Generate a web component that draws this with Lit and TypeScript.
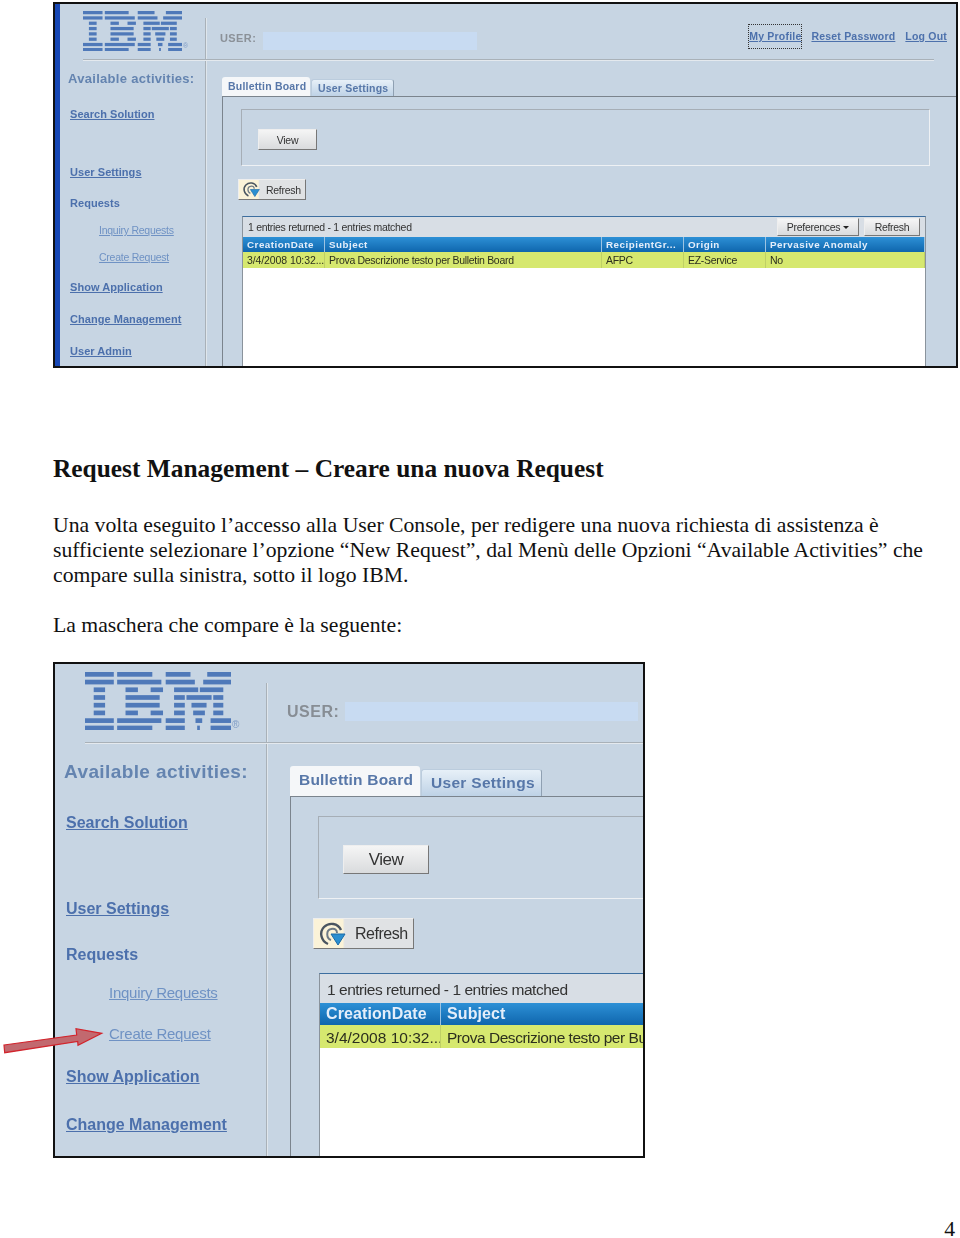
import { LitElement, html, svg, css } from "lit";
import { customElement, property } from "lit/decorators.js";

type NavItem = [string, "title" | "main" | "plain" | "sub", number];

const NAV_A: NavItem[] = [
  ["Available activities:", "title", 11],
  ["Search Solution", "main", 21],
  ["User Settings", "main", 44],
  ["Requests", "plain", 17],
  ["Inquiry Requests", "sub", 13],
  ["Create Request", "sub", 13],
  ["Show Application", "main", 16],
  ["Change Management", "main", 18],
  ["User Admin", "main", 18],
];
const NAV_B: NavItem[] = [
  ["Available activities:", "title", 18],
  ["Search Solution", "main", 31],
  ["User Settings", "main", 66],
  ["Requests", "plain", 26],
  ["Inquiry Requests", "sub", 18],
  ["Create Request", "sub", 21],
  ["Show Application", "main", 23],
  ["Change Management", "main", 28],
];

const ROWS: [number, number[]][] = [
  [12, [17, 103, 113, 218, 258, 332, 382, 453]],
  [35, [17, 103, 113, 245, 258, 345, 370, 453]],
  [58, [43, 77, 138, 175, 213, 250, 283, 355, 360, 430]],
  [81, [43, 77, 138, 240, 283, 315, 320, 395, 400, 430]],
  [104, [43, 77, 138, 240, 283, 315, 335, 380, 400, 430]],
  [127, [43, 77, 138, 175, 213, 250, 283, 315, 340, 375, 400, 430]],
  [150, [17, 103, 113, 245, 258, 315, 347, 367, 392, 453]],
  [172, [17, 103, 113, 218, 258, 315, 352, 360, 392, 453]],
];

@customElement("console-shot")
class ConsoleShot extends LitElement {
  @property() variant = "a";

  static styles = css`
    :host { display: block; }
    .shot {
      --pad-logo: 23px; --logo-w: 99px; --logo-h: 40px; --logo-top: 7px; --head-h: 55px; --div-top: 14px;
      --side-w: 145px; --fs-user: 11px; --fs-link: 11px; --fs-title: 13px; --fs-sub: 10.5px; --sub-ls: -.25px; --lh: 14px;
      --fs-tab: 10.5px; --fs-cell: 10.5px; --cell-ls: -.3px;
      --link-ls: .05px; --title-ls: .3px;
      display: flex; box-sizing: border-box; border: 2px solid #111; background: #c7d5e3; overflow: hidden;
      font-family: "Liberation Sans", Arial, sans-serif; width: 905px; height: 366px;
    }
    .shot.b {
      --pad-logo: 30px; --logo-w: 146px; --logo-h: 58px; --logo-top: 8px; --head-h: 78px; --div-top: 19px;
      --side-w: 211px; --fs-user: 16px; --fs-link: 16px; --fs-title: 19px; --fs-sub: 15px; --sub-ls: -.25px; --lh: 20px;
      --fs-tab: 15.5px; --fs-cell: 15.5px; --cell-ls: -.47px;
      --link-ls: 0px; --title-ls: .4px;
      width: 592px; height: 496px;
    }
    .inner { display: flex; flex: 1; min-width: 0; filter: blur(.35px); }
    .strip { width: 5px; flex: none; background: #1747b4; }
    .b .strip { display: none; }
    .col { flex: 1; min-width: 0; display: flex; flex-direction: column; }
    .head { display: flex; height: var(--head-h); flex: none; }
    .logo-cell { width: var(--side-w); flex: none; box-sizing: border-box; padding: var(--logo-top) 0 0 var(--pad-logo); display: flex; align-items: flex-start; }
    .logo { width: var(--logo-w); height: var(--logo-h); flex: none; fill: #4f79b9; }
    .reg { font-size: 7px; color: #7f9cc6; align-self: flex-start; margin: 31px 0 0 1px; }
    .b .reg { font-size: 10px; margin: 47px 0 0 1px; }
    .vline { width: 1px; flex: none; background: #a9b1b8; box-shadow: 1px 0 0 #dfe6ec; margin-top: var(--div-top); }
    .vline.full { margin-top: 0; }
    .user { display: flex; align-items: flex-start; padding-left: 14px; padding-top: 28px; }
    .user-l { font-size: var(--fs-user); font-weight: 700; color: #8b9198; line-height: 12px; letter-spacing: .4px; width: 43px; }
    .user-v { width: 214px; height: 18px; background: #c8dbf2; }
    .b .user { padding-left: 20px; padding-top: 38px; }
    .b .user-l { line-height: 20px; width: 58px; letter-spacing: .5px; color: #878d94; }
    .b .user-v { width: 293px; height: 19px; }
    .links { margin-left: auto; display: flex; gap: 10px; padding: 25px 9px 0 0; font-size: 10.5px; font-weight: 700; letter-spacing: .2px; line-height: 14px; }
    .links a { color: #4d71ac; text-decoration: underline; height: 14px; }
    .links a:first-child { outline: 1px dotted #333; padding: 4px 0 5px; margin-top: -4px; }
    .hl { flex: none; height: 1px; background: #a9b1b8; box-shadow: 0 1px 0 #e4e9ee; margin: 0 22px 1px var(--pad-logo); }
    .b .hl { margin-right: 0; }
    .body { display: flex; flex: 1; min-height: 0; }
    .side { width: var(--side-w); flex: none; display: flex; flex-direction: column; overflow: hidden; }
    .it { line-height: var(--lh); white-space: nowrap; flex: none; }
    .title { font-size: var(--fs-title); font-weight: 700; color: #6484b0; padding-left: 8px; letter-spacing: var(--title-ls); }
    .main, .plain { font-size: var(--fs-link); font-weight: 700; color: #4c70ac; padding-left: 10px; letter-spacing: var(--link-ls); }
    .main span { text-decoration: underline; }
    .sub { font-size: var(--fs-sub); letter-spacing: var(--sub-ls); color: #6f92c4; padding-left: 39px; }
    .sub span { text-decoration: underline; }
    .b .title { padding-left: 9px; }
    .b .main, .b .plain { padding-left: 11px; }
    .b .sub { padding-left: 54px; }
    .mainp { flex: 1; min-width: 0; display: flex; flex-direction: column; padding: 16px 0 0 16px; }
    .b .mainp { padding: 22px 0 0 23px; }
    .tabs { display: flex; align-items: flex-end; height: 19px; flex: none; gap: 1px; }
    .b .tabs { height: 30px; }
    .tab { box-sizing: border-box; display: flex; align-items: center; font-size: var(--fs-tab); font-weight: 700; letter-spacing: .2px; color: #5777a8; white-space: nowrap; border-radius: 3px 3px 0 0; }
    .t1 { width: 88px; height: 19px; background: #f5f7f9; padding: 0 0 2px 6px; }
    .t2 { width: 83px; height: 17px; background: linear-gradient(#e7f0f8, #bed2e6); border: 1px solid #bcd; border-bottom: 0; border-right-color: #8fa0b2; padding-left: 6px; }
    .b .t1 { width: 130px; height: 30px; padding: 0 0 2px 9px; letter-spacing: .2px; }
    .b .t2 { width: 121px; height: 27px; padding-left: 9px; letter-spacing: .3px; }
    .panel { flex: 1; min-height: 0; border-top: 1px solid #7b848d; border-left: 1px solid #7b848d; display: flex; flex-direction: column; }
    .fs { box-sizing: border-box; flex: none; width: 689px; height: 57px; margin: 12px 0 0 18px; border: 1px solid #eef1f4; border-top-color: #a6aeb6; border-left-color: #a6aeb6; padding: 19px 0 0 16px; }
    .b .fs { width: 700px; height: 83px; margin: 19px 0 0 27px; padding: 28px 0 0 24px; }
    .btn { box-sizing: border-box; display: flex; align-items: center; justify-content: center; font-size: var(--fs-cell); letter-spacing: var(--cell-ls); color: #333; background: linear-gradient(#f5f5f5, #d9dbdd); border: 1px solid #eee; border-right-color: #777; border-bottom-color: #777; }
    .view { width: 59px; height: 21px; }
    .b .view { width: 86px; height: 29px; font-size: 17px; }
    .rf { flex: none; width: 68px; height: 21px; margin: 13px 0 0 15px; justify-content: flex-start; background: linear-gradient(90deg, #fbf3d8 0 29%, #e0e2e4 31%); gap: 6px; padding-left: 3px; }
    .rf svg { width: 18px; height: 17px; flex: none; }
    .b .rf { width: 101px; height: 31px; margin: 19px 0 0 22px; font-size: 16px; gap: 9px; padding-left: 4px; }
    .b .rf svg { width: 28px; height: 26px; }
    .tbl { flex: 1; min-height: 0; width: 684px; margin: 16px 0 0 19px; background: #fff; border-top: 1px solid #3c6ea0; border-left: 1px solid #8a939c; border-right: 1px solid #8a939c; box-sizing: border-box; display: flex; flex-direction: column; }
    .b .tbl { width: 980px; margin: 24px 0 0 28px; }
    .bar { flex: none; height: 20px; background: #d8dee5; display: flex; align-items: center; font-size: var(--fs-cell); letter-spacing: var(--cell-ls); color: #333; padding-left: 5px; }
    .bar > span { white-space: nowrap; }
    .tools { margin-left: auto; display: flex; gap: 5px; padding-right: 5px; }
    .tools .btn { height: 18px; }
    .pref { width: 82px; gap: 3px; }
    .ref2 { width: 56px; }
    .caret { width: 0; height: 0; border: 3px solid transparent; border-top: 3px solid #222; border-bottom: 0; }
    .b .bar { height: 29px; padding: 2px 0 0 7px; box-sizing: border-box; }
    .row { flex: none; display: grid; grid-template-columns: 82px 277px 82px 82px 1fr; font-size: var(--fs-cell); white-space: nowrap; }
    .b .row { grid-template-columns: 121px 1fr; }
    .row div { overflow: hidden; padding-left: 4px; box-sizing: border-box; }
    .hdr { height: 15px; line-height: 16px; background: linear-gradient(#2d90d6, #0f66ad); color: #e4eefa; font-weight: 700; font-size: 9.8px; letter-spacing: .5px; }
    .hdr div { border-right: 1px solid #9cc3e2; }
    .dat { height: 16px; line-height: 17px; background: #d6e86f; color: #2c2f1e; letter-spacing: var(--cell-ls); }
    .dat div { border-right: 1px solid #bfd065; }
    .dat .d { letter-spacing: -.1px; }
    .b .hdr { height: 22px; line-height: 21px; font-size: 16px; letter-spacing: .1px; }
    .b .dat { height: 23px; line-height: 25px; }
    .b .dat .d { letter-spacing: 0; }
    .b .row div { padding-left: 6px; }
  `;

  private logo() {
    return html`<svg class="logo" viewBox="17 12 436 173" preserveAspectRatio="none" aria-label="IBM">
      ${ROWS.flatMap(([y, xs]) => {
        const out = [];
        for (let i = 0; i < xs.length; i += 2) {
          out.push(svg`<rect x=${xs[i]} y=${y} width=${xs[i + 1] - xs[i]} height="14"></rect>`);
        }
        return out;
      })}
    </svg>`;
  }

  private refreshIcon() {
    return html`<svg viewBox="0 0 28 26" fill="none">
      <path d="M10 23 C3 20 1 11 6 6 C11 1 20 2 23 9" stroke="#4a5560" stroke-width="2.4"></path>
      <path d="M13 19 C8 17 8 9 13 8 C17 7 19 9 19 12" stroke="#6d7a85" stroke-width="2"></path>
      <path d="M13 13 H27 L20 24 Z" fill="#2b8fd0" stroke="#1a6aa8" stroke-width="1"></path>
    </svg>`;
  }

  render() {
    const isB = this.variant === "b";
    const nav = isB ? NAV_B : NAV_A;
    return html`<div class="shot ${this.variant}"><div class="inner">
      <div class="strip"></div>
      <div class="col">
        <div class="head">
          <div class="logo-cell">${this.logo()}<span class="reg">®</span></div>
          <div class="vline"></div>
          <div class="user"><span class="user-l">USER:</span><span class="user-v"></span></div>
          ${isB ? "" : html`<div class="links"><a>My Profile</a><a>Reset Password</a><a>Log Out</a></div>`}
        </div>
        <div class="hl"></div>
        <div class="body">
          <div class="side">
            ${nav.map(([t, k, m]) => html`<div class="it ${k}" style="margin-top:${m}px"><span>${t}</span></div>`)}
          </div>
          <div class="vline full"></div>
          <div class="mainp">
            <div class="tabs"><div class="tab t1">Bullettin Board</div><div class="tab t2">User Settings</div></div>
            <div class="panel">
              <div class="fs"><div class="btn view">View</div></div>
              <div class="btn rf">${this.refreshIcon()}<span>Refresh</span></div>
              <div class="tbl">
                <div class="bar">
                  <span>1 entries returned - 1 entries matched</span>
                  ${isB ? "" : html`<div class="tools"><div class="btn pref">Preferences <i class="caret"></i></div><div class="btn ref2">Refresh</div></div>`}
                </div>
                ${isB
                  ? html`<div class="row hdr"><div>CreationDate</div><div>Subject</div></div>
                      <div class="row dat"><div class="d">3/4/2008 10:32...</div><div>Prova Descrizione testo per Bulletin Board</div></div>`
                  : html`<div class="row hdr"><div>CreationDate</div><div>Subject</div><div>RecipientGr...</div><div>Origin</div><div>Pervasive Anomaly</div></div>
                      <div class="row dat"><div class="d">3/4/2008 10:32...</div><div>Prova Descrizione testo per Bulletin Board</div><div>AFPC</div><div>EZ-Service</div><div>No</div></div>`}
              </div>
            </div>
          </div>
        </div>
      </div>
    </div></div>`;
  }
}

@customElement("app-root")
class AppRoot extends LitElement {
  static styles = css`
    :host { display: block; }
    .page { position: relative; box-sizing: border-box; width: 960px; height: 1238px; overflow: hidden; background: #fff; padding: 2px 0 0 53px; font-family: "Liberation Serif", "Times New Roman", serif; color: #111; }
    h1 { margin: 86px 0 0; font-size: 25.4px; line-height: 28px; font-weight: 700; white-space: nowrap; }
    p { margin: 31px 0 0; font-size: 21.7px; line-height: 25px; white-space: nowrap; }
    p.next { margin-top: 25px; }
    .second { margin-top: 24px; }
    .num { position: absolute; right: 5px; top: 1220px; font-size: 21.7px; line-height: 18px; }
    .arrow { position: absolute; left: 0; top: 1020px; width: 110px; height: 40px; }
  `;
  render() {
    return html`<div class="page">
      <console-shot variant="a"></console-shot>
      <h1>Request Management – Creare una nuova Request</h1>
      <p>Una volta eseguito l’accesso alla User Console, per redigere una nuova richiesta di assistenza è<br />
      sufficiente selezionare l’opzione “New Request”, dal Menù delle Opzioni “Available Activities” che<br />
      compare sulla sinistra, sotto il logo IBM.</p>
      <p class="next">La maschera che compare è la seguente:</p>
      <console-shot class="second" variant="b"></console-shot>
      <svg class="arrow" viewBox="0 1020 110 40">
        <polygon points="4,1045 76.7,1035 76,1028.7 101.7,1033.3 78,1045.3 77.7,1041.5 4.7,1052.7" fill="#c2696f" stroke="#d2242c" stroke-width="1.2"></polygon>
      </svg>
      <div class="num">4</div>
    </div>`;
  }
}
